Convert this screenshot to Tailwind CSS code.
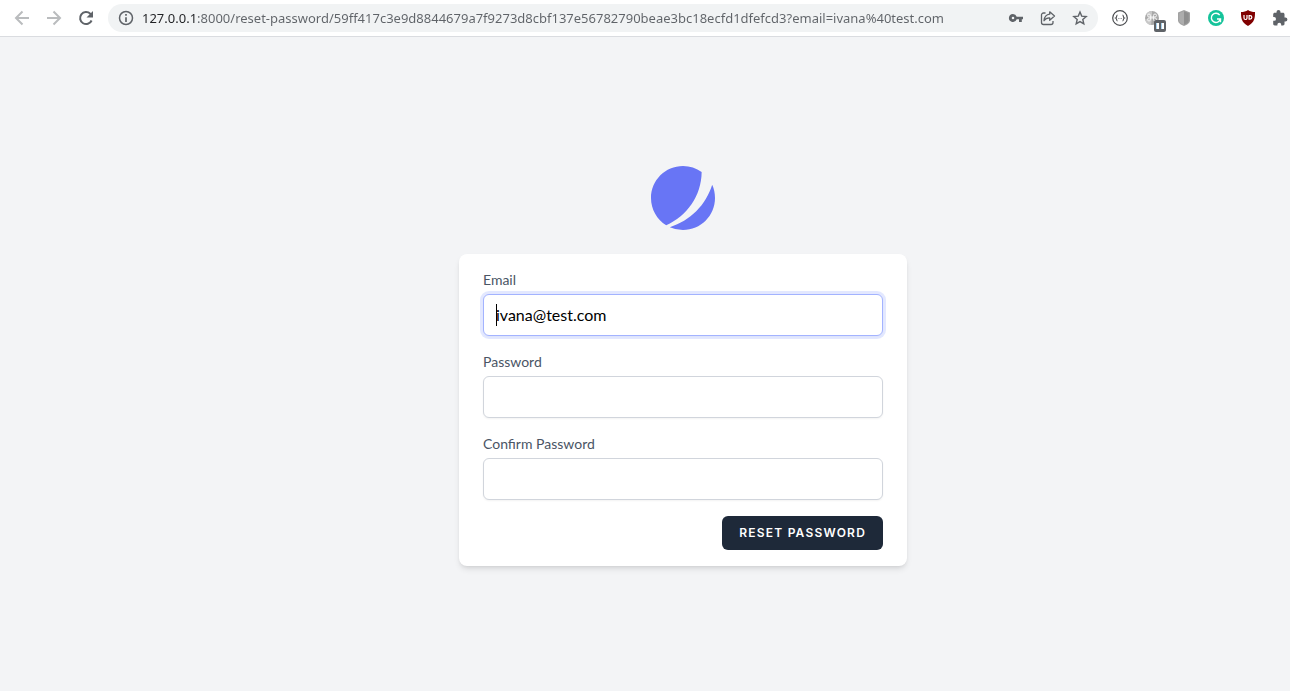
<!DOCTYPE html>
<html lang="en">
<head>
<meta charset="utf-8">
<title>Reset Password</title>
<script src="https://cdn.jsdelivr.net/npm/@tailwindcss/browser@4"></script>
</head>
<body class="flex min-h-screen flex-col overflow-x-hidden bg-gray-100 font-['Lato',sans-serif]">

<!-- Browser toolbar -->
<header class="flex h-[37px] shrink-0 items-center border-b border-[#dadce0] bg-white pr-[2px] pl-[14px] text-[#5f6368]">
  <nav class="flex shrink-0 gap-4" aria-label="Navigation">
    <button type="button" aria-label="Back" class="text-[#babcbe]"><svg class="size-4" viewBox="0 0 16 16" fill="none" stroke="currentColor" stroke-width="2"><path d="M15 8H2M8.500 1.500 2 8l6.500 6.500"/></svg></button>
    <button type="button" aria-label="Forward" class="text-[#babcbe]"><svg class="size-4" viewBox="0 0 16 16" fill="none" stroke="currentColor" stroke-width="2"><path d="M1 8h13M7.500 1.500 14 8l-6.500 6.500"/></svg></button>
    <button type="button" aria-label="Reload"><svg class="size-4" viewBox="0 0 16 16"><path d="M13.600 10.500A6 6 0 1 1 12.300 3.800L13.500 5" fill="none" stroke="currentColor" stroke-width="2"/><path d="M15 1v6.500H8.500z" fill="currentColor"/></svg></button>
  </nav>
  <div class="ml-[14px] flex h-7 min-w-0 flex-1 items-center rounded-full bg-[#f1f3f4] px-[10px]">
    <button type="button" aria-label="Site information" class="shrink-0"><svg class="size-4" viewBox="0 0 16 16" fill="none" stroke="currentColor"><circle cx="8" cy="8" r="6.500" stroke-width="1.500"/><path d="M8 7.200V12M8 4v1.800" stroke-width="1.700"/></svg></button>
    <input aria-label="Address" class="ml-2 min-w-0 flex-1 bg-[linear-gradient(90deg,#202124_55px,#5f6368_55px)] bg-clip-text font-['Noto_Sans',sans-serif] text-[13px] leading-5 text-transparent outline-none" value="127.0.0.1:8000/reset-password/59ff417c3e9d8844679a7f9273d8cbf137e56782790beae3bc18ecfd1dfefcd3?email=ivana%40test.com">
    <div class="flex shrink-0 gap-4">
      <button type="button" aria-label="Passwords"><svg class="size-4" viewBox="0 0 16 16" fill="currentColor"><path fill-rule="evenodd" d="M5 4a4 4 0 1 0 3.700 5.300H11V12h2.800V9.300H15V6.700H8.700A4 4 0 0 0 5 4zm0 2.700a1.300 1.300 0 1 1 0 2.600 1.300 1.300 0 0 1 0-2.600z"/></svg></button>
      <button type="button" aria-label="Share"><svg class="size-4" viewBox="0 0 16 16" fill="none" stroke="currentColor" stroke-width="1.300" stroke-linejoin="round"><path d="M5.500 3H3.500A2 2 0 0 0 1.500 5v7.500a2 2 0 0 0 2 2h7.500a2 2 0 0 0 2-2V11"/><path d="M9.700 1.800 14.500 6 9.700 10.200V7.900C7 7.800 5.300 8.700 4 10.700 4.300 7.300 6.200 4.700 9.700 4.200z"/></svg></button>
      <button type="button" aria-label="Bookmark"><svg class="size-4" viewBox="0 0 16 16" fill="none" stroke="currentColor" stroke-width="1.400"><path d="m8 2 1.700 4.100 4.500.4-3.400 3 1 4.400L8 11.600l-3.800 2.300 1-4.400-3.400-3 4.500-.4z"/></svg></button>
    </div>
  </div>
  <div class="ml-[14px] flex shrink-0 items-center gap-4">
    <button type="button" aria-label="JSON viewer"><svg class="size-4" viewBox="0 0 16 16" fill="none" stroke="#4b4d50"><circle cx="8" cy="8" r="7.300" stroke-width="1.200"/><path d="M5.500 5C4.300 5 5 7.500 3.700 8 5 8.500 4.300 11 5.500 11M10.500 5c1.200 0 .5 2.500 1.800 3-1.300.5-.6 3-1.800 3" stroke-width="1.100"/><path d="M6.400 8.500h.7M7.700 8.500h.7M9 8.500h.7" stroke-width=".8"/></svg></button>
    <button type="button" aria-label="Paused extension"><svg class="size-4 overflow-visible" viewBox="0 0 16 16"><circle cx="8" cy="8" r="7" fill="#a9a9a9"/><path d="M8 1a7 7 0 0 0-6 3.500L8 8zM1.200 9.500A7 7 0 0 0 7 15l1-7z" fill="#c8c8c8"/><path d="M6.500 7V5.500A1.500 1.500 0 1 0 5 7h6a1.500 1.500 0 1 0-1.500-1.500v4A1.500 1.500 0 1 0 11 8H5a1.500 1.500 0 1 0 1.500 1.500z" fill="none" stroke="#f4f4f4"/><rect x="10" y="10" width="12" height="12" rx="2" fill="#5f6368"/><path d="M12 13h3v6h-3zM17 13h3v6h-3z" fill="#fff"/><path d="M12.500 13v6M17.500 13v6" stroke="#a9d5f2"/></svg></button>
    <button type="button" aria-label="Shield extension"><svg class="size-4" viewBox="0 0 16 16"><path d="M8 0 14 2.500v7.700C14 13 11 14.800 8 16 5 14.800 2 13 2 10.200V2.500z" fill="#a2a2a2"/><path d="M8 1.200 12.700 3.200v7c0 2-2 3.500-4.700 4.600z" fill="#8f8f8f"/><path d="M8 1.200 3.300 3.200v7c0 2 2 3.500 4.700 4.600z" fill="#adadad"/></svg></button>
    <button type="button" aria-label="Writing assistant"><svg class="size-4" viewBox="0 0 16 16"><circle cx="8" cy="8" r="8" fill="#15c39a"/><path d="M11.700 5.200A4.600 4.600 0 1 0 12.400 9H9M12.500 8.700v3.500" fill="none" stroke="#fff" stroke-width="1.400"/></svg></button>
    <button type="button" aria-label="Content blocker"><svg class="size-4" viewBox="0 0 16 16"><path d="M8 0c2 1.500 4.500 2 7 2 0 6-.2 10-7 14C1.200 12 1 8 1 2c2.500 0 5-.5 7-2z" fill="#800000"/><path d="M4 5v3a1.500 1.500 0 0 0 3 0V5M9.100 5.600v3.500h1a1.750 1.750 0 0 0 0-3.500z" fill="none" stroke="#fff" stroke-width="1.200"/></svg></button>
    <button type="button" aria-label="Extensions"><svg class="size-4" viewBox="0 0 16 16" fill="currentColor"><path d="M13.400 7.400h-.9V4.300c0-.8-.7-1.500-1.500-1.500H8.500V2a2 2 0 0 0-4 0v.8H2.700c-.8 0-1.500.7-1.500 1.500v2.700h.9a1.900 1.900 0 0 1 0 3.800h-.9v3.300c0 .8.700 1.400 1.500 1.400h2.700v-.9a1.900 1.900 0 0 1 3.800 0v.9H11c.8 0 1.500-.6 1.500-1.400v-2.700h.9a2 2 0 0 0 0-4z"/></svg></button>
  </div>
</header>

<!-- Reset form -->
<main class="flex flex-1 flex-col items-center pt-[129px] pl-[76px]">
  <a href="/" aria-label="Home">
    <svg class="size-16" viewBox="0 0 48 48" fill="#6875F5"><path d="M11.395 44.428C4.557 40.198 0 32.632 0 24 0 10.745 10.745 0 24 0a23.891 23.891 0 0113.997 4.502c-.2 17.907-11.097 33.245-26.602 39.926z"/><path d="M14.134 45.885A23.914 23.914 0 0024 48c13.255 0 24-10.745 24-24 0-3.516-.756-6.856-2.115-9.866-4.659 15.143-16.608 27.092-31.750 31.751z"/></svg>
  </a>
  <form class="mt-6 w-full max-w-md rounded-lg bg-white px-6 py-4 shadow-md">
    <label for="email" class="block text-sm text-gray-600">Email</label>
    <div class="relative mt-1">
      <input id="email" type="email" value="ivana@test.com" class="block w-full rounded-md border border-indigo-300 bg-white px-3 py-2 text-base text-black shadow-xs ring-3 ring-indigo-200/50 outline-none">
      <span class="absolute top-[10px] left-[13px] h-[22px] w-px bg-black" aria-hidden="true"></span>
    </div>
    <label for="password" class="mt-4 block text-sm text-gray-600">Password</label>
    <input id="password" type="password" class="mt-1 block w-full rounded-md border border-gray-300 bg-white px-3 py-2 text-base shadow-xs">
    <label for="confirm" class="mt-4 block text-sm text-gray-600">Confirm Password</label>
    <input id="confirm" type="password" class="mt-1 block w-full rounded-md border border-gray-300 bg-white px-3 py-2 text-base shadow-xs">
    <div class="mt-4 flex justify-end">
      <button type="submit" class="rounded-md border border-transparent bg-gray-800 px-4 py-2 font-['Inter',sans-serif] text-xs font-semibold tracking-widest text-white uppercase">Reset Password</button>
    </div>
  </form>
</main>
</body>
</html>
